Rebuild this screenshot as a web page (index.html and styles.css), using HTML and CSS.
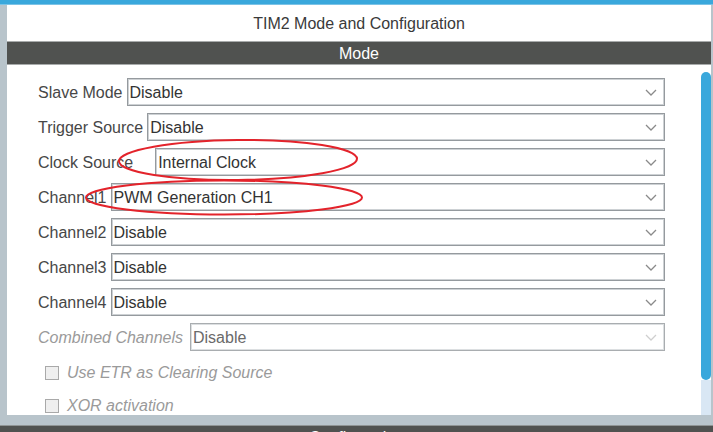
FILE: index.html
```html
<!DOCTYPE html>
<html>
<head>
<meta charset="utf-8">
<link rel="stylesheet" href="styles.css">
</head>
<body>
<div class="topbar"></div>
<div class="main">
  <div class="panel">
    <div class="title">TIM2 Mode and Configuration</div>
    <div class="section-bar">Mode</div>
    <div class="content">
      <div class="form">
        <div class="row"><span class="label">Slave Mode</span><div class="select"><span class="value">Disable</span><svg class="chev" width="12" height="7" viewBox="0 0 12 7"><path d="M1 1 L6 6 L11 1" fill="none" stroke="#8a8a8a" stroke-width="1.3"/></svg></div></div>
        <div class="row"><span class="label">Trigger Source</span><div class="select"><span class="value">Disable</span><svg class="chev" width="12" height="7" viewBox="0 0 12 7"><path d="M1 1 L6 6 L11 1" fill="none" stroke="#8a8a8a" stroke-width="1.3"/></svg></div></div>
        <div class="row"><span class="label label-wide">Clock Source</span><div class="select"><span class="value">Internal Clock</span><svg class="chev" width="12" height="7" viewBox="0 0 12 7"><path d="M1 1 L6 6 L11 1" fill="none" stroke="#8a8a8a" stroke-width="1.3"/></svg></div></div>
        <div class="row"><span class="label">Channel1</span><div class="select"><span class="value">PWM Generation CH1</span><svg class="chev" width="12" height="7" viewBox="0 0 12 7"><path d="M1 1 L6 6 L11 1" fill="none" stroke="#8a8a8a" stroke-width="1.3"/></svg></div></div>
        <div class="row"><span class="label">Channel2</span><div class="select"><span class="value">Disable</span><svg class="chev" width="12" height="7" viewBox="0 0 12 7"><path d="M1 1 L6 6 L11 1" fill="none" stroke="#8a8a8a" stroke-width="1.3"/></svg></div></div>
        <div class="row"><span class="label">Channel3</span><div class="select"><span class="value">Disable</span><svg class="chev" width="12" height="7" viewBox="0 0 12 7"><path d="M1 1 L6 6 L11 1" fill="none" stroke="#8a8a8a" stroke-width="1.3"/></svg></div></div>
        <div class="row"><span class="label">Channel4</span><div class="select"><span class="value">Disable</span><svg class="chev" width="12" height="7" viewBox="0 0 12 7"><path d="M1 1 L6 6 L11 1" fill="none" stroke="#8a8a8a" stroke-width="1.3"/></svg></div></div>
        <div class="row disabled"><span class="label label-dis">Combined Channels</span><div class="select"><span class="value">Disable</span><svg class="chev" width="12" height="7" viewBox="0 0 12 7"><path d="M1 1 L6 6 L11 1" fill="none" stroke="#cfcfcf" stroke-width="1.3"/></svg></div></div>
        <div class="checks">
          <div class="check-row"><span class="box"></span><span class="check-label">Use ETR as Clearing Source</span></div>
          <div class="check-row"><span class="box"></span><span class="check-label">XOR activation</span></div>
        </div>
      </div>
      <div class="scroll"><div class="thumb"></div><div class="track"></div></div>
    </div>
  </div>
</div>
<div class="bottombar">Configuration</div>
<svg class="annotations" width="713" height="432" viewBox="0 0 713 432">
  <ellipse cx="238" cy="160" rx="119" ry="20" fill="none" stroke="#e3232b" stroke-width="2" transform="rotate(-0.6 238 160)"/>
  <ellipse cx="224" cy="197.5" rx="138" ry="17" fill="none" stroke="#e3232b" stroke-width="2"/>
</svg>
</body>
</html>
```

FILE: styles.css
```css
html, body {
  margin: 0;
  padding: 0;
}
body {
  width: 713px;
  height: 432px;
  overflow: hidden;
  background: #b8c4cb;
  font-family: "Liberation Sans", Arial, sans-serif;
  font-size: 16px;
  position: relative;
}
.topbar {
  height: 5px;
  background: #3aa8dc;
  border-bottom: 1px solid #7cc3e6;
  box-sizing: border-box;
}
.main {
  display: flex;
  padding-left: 7px;
  height: 410px;
}
.panel {
  width: 704px;
  background: #fff;
  display: flex;
  flex-direction: column;
}
.title {
  height: 36px;
  box-sizing: border-box;
  padding-top: 1px;
  line-height: 36px;
  text-align: center;
  color: #3a3a3a;
}
.section-bar {
  height: 24px;
  box-sizing: border-box;
  border-top: 1px solid #a8abab;
  border-bottom: 1px solid #a8abab;
  background: #505250;
  color: #fff;
  text-align: center;
  padding-top: 1px;
  line-height: 21px;
}
.content {
  flex: 1;
  display: flex;
  overflow: hidden;
}
.form {
  flex: 1;
  padding: 13px 36px 0 31px;
}
.row {
  display: flex;
  align-items: center;
  height: 28px;
  margin-bottom: 7px;
}
.label {
  color: #474747;
  white-space: nowrap;
  margin-right: 4px;
  padding-top: 2px;
}
.label-wide {
  margin-right: 22px;
}
.label-dis {
  font-style: italic;
  color: #9a9a9a;
  margin-right: 7px;
}
.select {
  flex: 1;
  height: 28px;
  box-sizing: border-box;
  border: 1px solid #959a9e;
  box-shadow: inset 0 0 0 1px #cdd1d4;
  display: flex;
  align-items: center;
  justify-content: space-between;
  padding-left: 2px;
  padding-right: 7px;
  color: #333;
}
.value {
  padding-top: 2px;
}
.disabled .select {
  border-color: #a9adb0;
  box-shadow: inset 0 0 0 1px #dcdfe1;
  color: #6a6a6a;
}
.chev {
  display: block;
}
.checks {
  margin-top: -2px;
  padding-left: 7px;
}
.check-row {
  height: 33px;
  display: flex;
  align-items: center;
}
.box {
  width: 14px;
  height: 14px;
  box-sizing: border-box;
  border: 1px solid #a9a9a9;
  background: #efefef;
  margin-right: 8px;
}
.check-label {
  font-style: italic;
  color: #9a9a9a;
}
.scroll {
  width: 10px;
  display: flex;
  flex-direction: column;
}
.thumb {
  margin-top: 7px;
  height: 308px;
  background: #3aa8dc;
  border-radius: 5px;
}
.track {
  flex: 1;
  background: #d9e7f4;
}
.bottombar {
  margin-top: 10px;
  height: 24px;
  box-sizing: border-box;
  background: #505250;
  border-top: 1px solid #8f9494;
  color: #fff;
  text-align: center;
  line-height: 20px;
  padding-top: 2px;
}
.annotations {
  position: absolute;
  left: 0;
  top: 0;
  pointer-events: none;
}
```
